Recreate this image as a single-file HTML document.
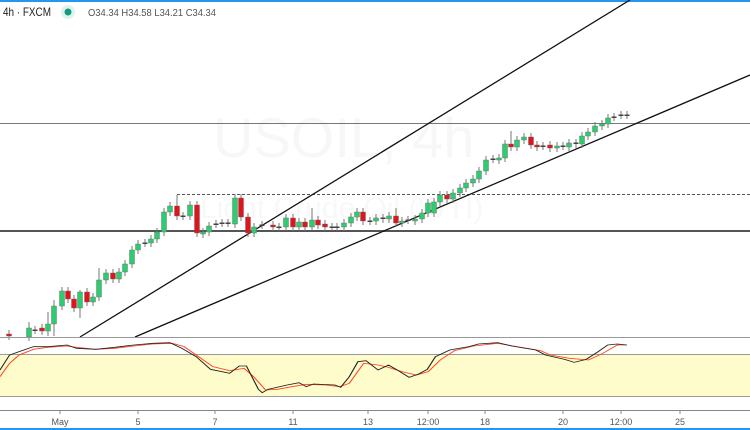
<!DOCTYPE html>
<html><head><meta charset="utf-8"><style>
html,body{margin:0;padding:0;background:#fff;width:750px;height:430px;overflow:hidden;font-family:"Liberation Sans",sans-serif}
</style></head><body>
<svg width="750" height="430" xmlns="http://www.w3.org/2000/svg" style="position:absolute;left:0;top:0">
<rect x="0" y="0" width="750" height="2" fill="#2196f3"/>
<rect x="0" y="428" width="750" height="2" fill="#2196f3"/>
<text x="213" y="157" font-size="56" fill="#f7f7f7" font-family="Liberation Sans">USOIL, 4h</text>
<text x="200" y="218" font-size="30" fill="#f8f8f8" font-family="Liberation Sans">Light Crude Oil (WTI)</text>
<line x1="0" y1="123.5" x2="750" y2="123.5" stroke="#777" stroke-width="1"/>
<line x1="177" y1="194.5" x2="750" y2="194.5" stroke="#555" stroke-width="1" stroke-dasharray="3,2"/>
<line x1="0" y1="231" x2="750" y2="231" stroke="#555" stroke-width="2"/>
<line x1="80" y1="337" x2="630" y2="0" stroke="#111" stroke-width="1.3"/>
<line x1="135" y1="337" x2="750" y2="75" stroke="#111" stroke-width="1.3"/>
<g id="c"></g>
<rect x="0" y="337" width="750" height="1" fill="#999"/>
<rect x="0" y="354" width="750" height="42" fill="#fffccc"/>
<line x1="0" y1="354.5" x2="750" y2="354.5" stroke="#999"/>
<line x1="0" y1="396.5" x2="750" y2="396.5" stroke="#999"/>
<g transform="translate(0,330) scale(0.4785,0.3333)" fill="none">
<polyline stroke="#ff4422" stroke-width="2.5" points="0,140 20,100 40,75 70,58 100,52 140,48 160,52 200,58 240,55 280,48 320,42 360,40 385,50 420,85 445,110 480,122 510,115 530,140 555,180 580,178 610,170 640,163 680,165 710,170 730,160 760,100 790,105 812,112 840,125 870,135 895,125 920,90 950,62 990,48 1040,40 1080,50 1130,62 1150,75 1190,85 1230,90 1260,70 1290,45 1310,45"/>
<polyline stroke="#222" stroke-width="2.5" points="0,120 20,75 40,65 70,50 100,50 140,45 160,55 200,58 240,52 280,45 320,40 355,38 380,55 410,80 440,118 480,130 500,108 515,108 540,178 548,188 560,178 600,165 625,158 640,170 655,162 700,165 712,172 730,140 748,95 765,92 790,120 812,105 830,120 855,142 875,132 893,118 910,80 940,60 980,50 1000,42 1040,38 1070,48 1120,60 1140,75 1180,88 1200,97 1225,88 1250,65 1270,45 1290,42 1310,45"/>
</g>
<line x1="0" y1="410.5" x2="750" y2="410.5" stroke="#888"/>
<g font-size="9" fill="#555" text-anchor="middle">
<text x="60" y="425">May</text><text x="138" y="425">5</text><text x="215" y="425">7</text><text x="293" y="425">11</text><text x="368" y="425">13</text><text x="428" y="425">12:00</text><text x="485" y="425">18</text><text x="563" y="425">20</text><text x="621" y="425">12:00</text><text x="680" y="425">25</text>
</g>
<g stroke="#888"><line x1="60" y1="410" x2="60" y2="414"/><line x1="138" y1="410" x2="138" y2="414"/><line x1="215" y1="410" x2="215" y2="414"/><line x1="293" y1="410" x2="293" y2="414"/><line x1="368" y1="410" x2="368" y2="414"/><line x1="428" y1="410" x2="428" y2="414"/><line x1="485" y1="410" x2="485" y2="414"/><line x1="563" y1="410" x2="563" y2="414"/><line x1="621" y1="410" x2="621" y2="414"/><line x1="680" y1="410" x2="680" y2="414"/></g>
<text x="3" y="16" font-size="12" fill="#222" textLength="48" lengthAdjust="spacingAndGlyphs">4h · FXCM</text>
<circle cx="68" cy="12" r="7" fill="#dff3ee"/><circle cx="68" cy="12" r="3.5" fill="#129a7a"/>
<text x="88" y="16" font-size="10" fill="#555" textLength="128" lengthAdjust="spacingAndGlyphs">O34.34 H34.58 L34.21 C34.34</text>
</svg>
<script>
var d=[[9,334,336],[29,337,328,322],[35,330,330],[42,328,331],[48,331,324,312,336],[54,324,306,300,336],[62,306,291],[68,291,299],[74,299,308],[80,308,292,290,318],[87,292,302],[93,302,297],[99,297,280,268],[106,280,273],[113,273,279],[119,279,272],[125,272,264],[132,264,250],[138,250,244],[145,243,243],[151,243,239],[157,239,232],[164,232,212],[170,212,206],[177,206,216,195],[183,216,216],[190,216,205],[197,205,233],[203,234,232],[209,232,226],[216,224,224],[222,223,223],[228,223,223],[235,224,198],[241,198,217],[248,217,233],[254,233,227],[262,225,225],[273,225,227],[279,227,227],[286,227,218],[293,218,227],[299,227,222],[305,222,227],[312,227,220,208],[318,220,225],[325,224,227],[332,227,227],[337,227,227],[344,227,223],[351,223,217],[357,217,212],[363,212,221],[370,221,221],[376,221,218],[383,218,219],[389,219,216],[396,216,223,208],[402,223,221],[408,220,220],[415,221,219],[422,219,213],[428,213,203],[434,213,202],[440,202,195],[447,195,199],[453,199,193],[460,193,188],[466,188,183],[473,183,179],[479,179,171],[486,171,160],[493,159,159],[499,160,158],[505,158,144],[511,144,147,131],[517,147,140],[524,140,137],[531,137,145],[537,145,147],[543,146,146],[550,145,148],[557,148,146],[563,146,146],[569,147,143],[576,143,144],[582,144,136],[588,136,132],[595,132,126],[602,126,124],[608,124,118],[614,117,117],[621,115,115],[627,115,115]];
var s='';d.forEach(function(c){var x=c[0],o=c[1],cl=c[2],t=Math.min(o,cl),b=Math.max(o,cl);var h=c[3]||t-4,l=c[4]||b+4;
s+='<line x1="'+x+'" x2="'+x+'" y1="'+h+'" y2="'+l+'" stroke="#777"/>';
if(b-t<1.5){s+='<rect x="'+(x-2.5)+'" y="'+(t-0.5)+'" width="5" height="1.5" fill="#444"/>';}
else s+='<rect x="'+(x-2.5)+'" y="'+t+'" width="5" height="'+(b-t)+'" fill="'+(cl<o?'#2ecc71':'#e0141c')+'" stroke="#666" stroke-width="0.4"/>';});
document.getElementById('c').innerHTML=s;
</script>
</body></html>
